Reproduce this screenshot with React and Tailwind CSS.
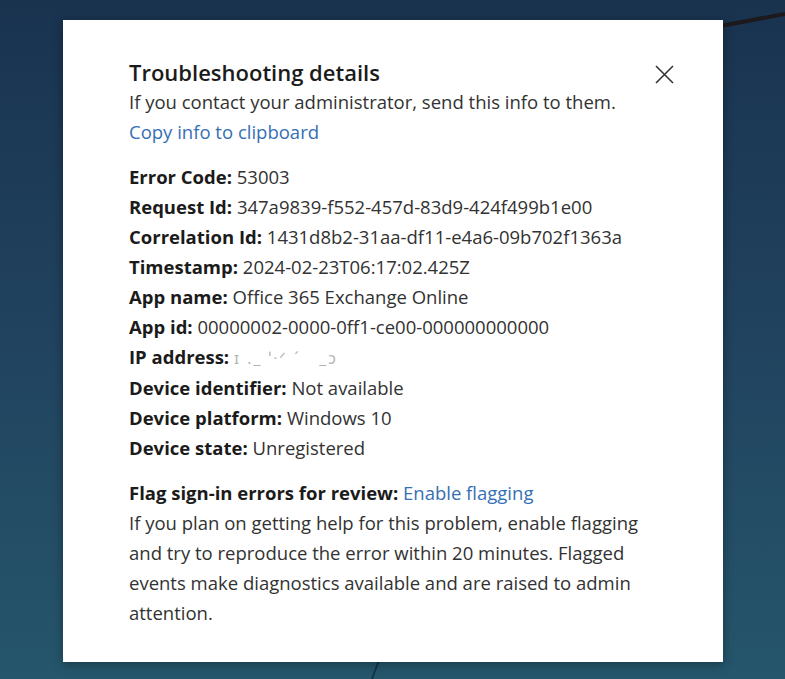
export default function App() {
    const details = [
        ["Error Code:", "53003"],
        ["Request Id:", "347a9839-f552-457d-83d9-424f499b1e00"],
        ["Correlation Id:", "1431d8b2-31aa-df11-e4a6-09b702f1363a"],
        ["Timestamp:", "2024-02-23T06:17:02.425Z"],
        ["App name:", "Office 365 Exchange Online"],
        ["App id:", "00000002-0000-0ff1-ce00-000000000000"],
        ["IP address:", null],
        ["Device identifier:", "Not available"],
        ["Device platform:", "Windows 10"],
        ["Device state:", "Unregistered"],
    ];

    return (
        <div
            className="relative h-[679px] w-full overflow-hidden bg-gradient-to-b from-[#19334f] via-[#21435f] to-[#25566b] pl-[63px] pt-[20px]"
            style={{ fontFamily: '"Open Sans", "Noto Sans", sans-serif' }}
        >
            {/* background wires */}
            <svg
                className="absolute left-0 top-0 pointer-events-none"
                width="785"
                height="679"
            >
                <path d="M720 26 L785 14" stroke="#1c1a1c" strokeWidth="4" />
                <path d="M379 660 L372 679" stroke="#173447" strokeWidth="2" />
            </svg>

            <div className="relative h-[642px] w-[660px] bg-white pl-[66px] pr-[49px] pt-[37px] shadow-[0_2px_10px_rgba(0,0,0,0.35)]">
                {/* Header */}
                <div className="flex items-center justify-between">
                    <h2 className="text-[22px] font-semibold leading-[30px] text-[#1b1b1b]">
                        Troubleshooting details
                    </h2>
                    <button className="mt-[4px] flex h-[20px] w-[20px] items-center justify-center text-[#333]">
                        <svg width="19" height="19" viewBox="0 0 19 19">
                            <path
                                d="M1 1 L18 18 M18 1 L1 18"
                                stroke="currentColor"
                                strokeWidth="1.6"
                            />
                        </svg>
                    </button>
                </div>

                <p className="text-[18.5px] leading-[30px] text-[#323232]">
                    If you contact your administrator, send this info to them.
                </p>
                <p className="text-[18.5px] leading-[30px] text-[#356fb4]">
                    Copy info to clipboard
                </p>

                {/* Details */}
                <div className="mt-[15px] text-[18.5px] leading-[30px] text-[#323232]">
                    {details.map(([label, value]) => (
                        <div key={label} className="whitespace-nowrap">
                            <span className="font-bold text-[#1b1b1b]">
                                {label}
                            </span>{" "}
                            {value !== null ? (
                                value
                            ) : (
                                <span className="text-[#b4b4b4] text-[16px] tracking-[2px]">
                                    ɪ ._ ˈᐧᐟ ˊ&nbsp;&nbsp;&nbsp;_ɔ
                                </span>
                            )}
                        </div>
                    ))}
                </div>

                {/* Flagging */}
                <div className="mt-[15px] text-[18.5px] leading-[30px] text-[#323232]">
                    <p>
                        <span className="font-bold text-[#1b1b1b]">
                            Flag sign-in errors for review:
                        </span>{" "}
                        <span className="text-[#356fb4]">Enable flagging</span>
                    </p>
                    <p className="w-[530px]">
                        If you plan on getting help for this problem, enable flagging
                        and try to reproduce the error within 20 minutes. Flagged
                        events make diagnostics available and are raised to admin
                        attention.
                    </p>
                </div>
            </div>
        </div>
    );
}
